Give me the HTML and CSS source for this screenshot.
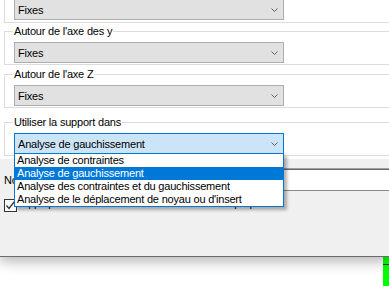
FILE: index.html
```html
<!DOCTYPE html>
<html lang="fr">
<head>
  <meta charset="UTF-8" />
  <title>Propriétés du support</title>
  <link rel="stylesheet" href="styles.css">
</head>
<body>
  <div class="window">
    <div class="props">
      <div class="group cut">
        <div class="combo">
          <span>Fixes</span>
          <svg class="chev" width="7" height="4" viewBox="0 0 7 4"><path d="M0.5 0.5 L3.5 3.5 L6.5 0.5" /></svg>
        </div>
      </div>

      <fieldset class="group g2">
        <legend>Autour de l'axe des y</legend>
        <div class="combo">
          <span>Fixes</span>
          <svg class="chev" width="7" height="4" viewBox="0 0 7 4"><path d="M0.5 0.5 L3.5 3.5 L6.5 0.5" /></svg>
        </div>
      </fieldset>

      <fieldset class="group g3">
        <legend>Autour de l'axe Z</legend>
        <div class="combo">
          <span>Fixes</span>
          <svg class="chev" width="7" height="4" viewBox="0 0 7 4"><path d="M0.5 0.5 L3.5 3.5 L6.5 0.5" /></svg>
        </div>
      </fieldset>

      <fieldset class="group g4">
        <legend>Utiliser la support dans</legend>
        <div class="combo open">
          <span>Analyse de gauchissement</span>
          <svg class="chev" width="7" height="4" viewBox="0 0 7 4"><path d="M0.5 0.5 L3.5 3.5 L6.5 0.5" /></svg>
          <ul class="droplist">
            <li>Analyse de contraintes</li>
            <li class="sel">Analyse de gauchissement</li>
            <li>Analyse des contraintes et du gauchissement</li>
            <li>Analyse de le déplacement de noyau ou d'insert</li>
          </ul>
        </div>
      </fieldset>
    </div>

    <div class="panel">
      <div class="name-row">
        <span class="name-label">Nom</span>
        <div class="textbox"></div>
      </div>
      <div class="check-row">
        <span class="checkbox">
          <svg width="11" height="11" viewBox="0 0 11 11"><path d="M1.5 5.5 L4 8.5 L9.5 1.5" /></svg>
        </span>
        <span class="check-label">Appliquer à toutes les entités dotées de cette propriété</span>
      </div>
    </div>
  </div>

  <div class="desk">
    <div class="green-bar"></div>
  </div>
</body>
</html>
```

FILE: styles.css
```css
body {
  margin: 0;
  width: 389px;
  height: 286px;
  overflow: hidden;
  background: #fff;
  font-family: "Liberation Sans", Tahoma, sans-serif;
  font-size: 11px;
  letter-spacing: -0.2px;
  color: #000;
}
.window {
  position: relative;
  z-index: 1;
  height: 257px;
  box-sizing: border-box;
  border-bottom: 1px solid #6b6b6b;
  box-shadow: 0 5px 12px rgba(0, 0, 0, 0.28);
}
.props {
  background: #fff;
  height: 159px;
  padding-left: 4px;
}
.group {
  width: 430px;
  box-sizing: border-box;
  margin: 0;
  min-width: 0;
  border: 1px solid #dcdcdc;
  padding: 4px 0 1px 9px;
}
.group legend {
  padding: 0 1px;
  margin-left: -1px;
  line-height: 13px;
}
.group.cut {
  border-top: none;
  padding: 0 0 2px 9px;
}
.group.cut .combo {
  height: 20px;
  border-top: none;
}
.g2 { margin-top: 2px; }
.g3 { margin-top: 3px; }
.g4 { margin-top: 8px; }

.combo {
  position: relative;
  width: 270px;
  height: 21px;
  box-sizing: border-box;
  display: flex;
  align-items: center;
  justify-content: space-between;
  padding: 0 5px 0 3px;
  background: #e1e1e1;
  border: 1px solid #adadad;
}
.chev path {
  fill: none;
  stroke: #606060;
  stroke-width: 1;
}
.combo.open {
  background: #cce4f7;
  border-color: #0078d7;
}
.droplist {
  position: absolute;
  top: 100%;
  left: -1px;
  width: 270px;
  box-sizing: border-box;
  margin: 0;
  padding: 0;
  list-style: none;
  background: #fff;
  border: 1px solid #0078d7;
  box-shadow: 3px 3px 3px rgba(0, 0, 0, 0.3);
  z-index: 2;
}
.droplist li {
  line-height: 13px;
  padding-left: 2px;
  white-space: nowrap;
}
.droplist li.sel {
  background: #0078d7;
  color: #fff;
}

.panel {
  height: 97px;
  background: #f0f0f0;
  overflow: hidden;
}
.name-row {
  display: flex;
  align-items: center;
  padding-top: 9px;
  padding-left: 4px;
}
.name-label {
  width: 60px;
}
.textbox {
  width: 360px;
  height: 23px;
  box-sizing: border-box;
  background: #fff;
  border-top: 1px solid #a0a0a0;
  border-bottom: 1px solid #8a8a8a;
  box-shadow: inset 0 1px 0 #696969;
}
.check-row {
  display: flex;
  align-items: flex-start;
  gap: 4px;
  margin-top: 8px;
  padding-left: 4px;
}
.checkbox {
  width: 13px;
  height: 13px;
  box-sizing: border-box;
  border: 1px solid #333;
  background: #fff;
  display: flex;
  align-items: center;
  justify-content: center;
}
.checkbox path {
  fill: none;
  stroke: #333;
  stroke-width: 1.3;
}
.check-label {
  line-height: 13px;
  margin-top: -2px;
}

.desk {
  height: 29px;
  display: flex;
  justify-content: flex-end;
}
.green-bar {
  width: 6px;
  background: #00ff00;
  border-top: 7px solid #00ff00;
  box-shadow: inset 0 8px 0 -7px #3a3a3a;
}
```
